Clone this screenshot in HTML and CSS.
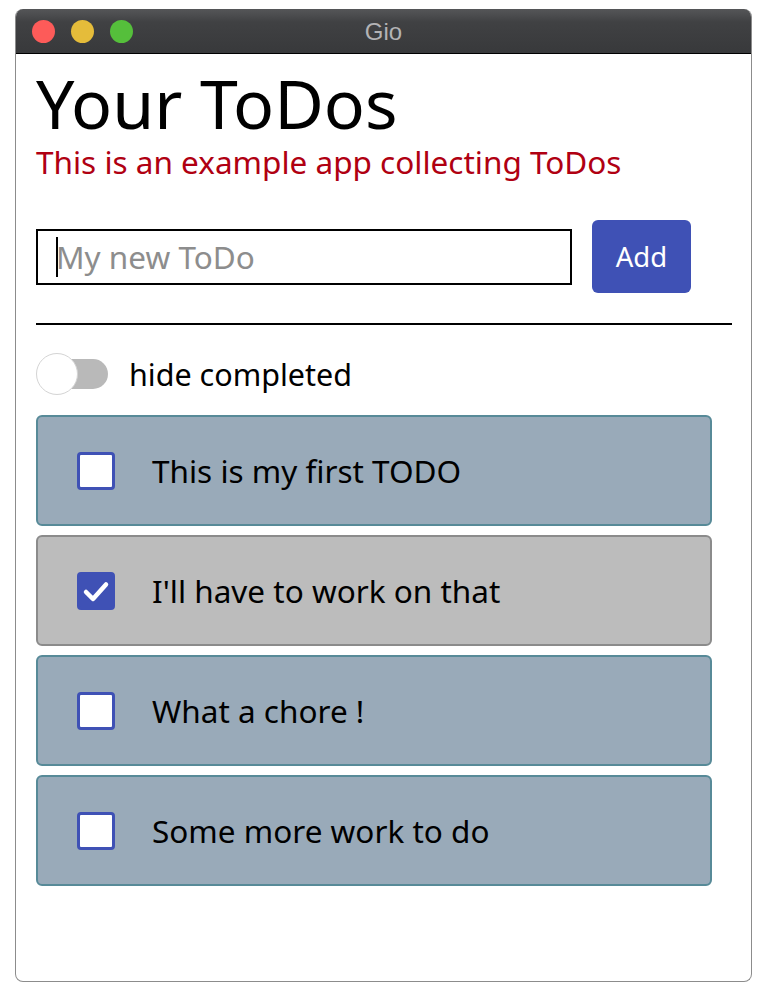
FILE: index.html
```html
<!DOCTYPE html>
<html>
<head>
<meta charset="utf-8">
<link rel="stylesheet" href="styles.css">
</head>
<body>
<div class="window">
  <div class="titlebar">
    <div class="lights">
      <span class="light red"></span>
      <span class="light yellow"></span>
      <span class="light green"></span>
    </div>
    <div class="title">Gio</div>
  </div>
  <div class="content">
    <h1 class="heading">Your ToDos</h1>
    <p class="subtitle">This is an example app collecting ToDos</p>
    <div class="new-row">
      <div class="input"><span class="caret"></span><span class="placeholder">My new ToDo</span></div>
      <button class="add-btn">Add</button>
    </div>
    <div class="separator"></div>
    <div class="switch-row">
      <div class="switch"><span class="track"></span><span class="thumb"></span></div>
      <span class="switch-label">hide completed</span>
    </div>
    <div class="list">
      <div class="card">
        <span class="checkbox"></span>
        <span class="card-text">This is my first TODO</span>
      </div>
      <div class="card done">
        <span class="checkbox checked">
          <svg viewBox="0 0 38 38" width="38" height="38"><path d="M9 20 L16 27 L29 12.5" fill="none" stroke="#fff" stroke-width="4.5" stroke-linecap="round" stroke-linejoin="round"/></svg>
        </span>
        <span class="card-text">I'll have to work on that</span>
      </div>
      <div class="card">
        <span class="checkbox"></span>
        <span class="card-text">What a chore !</span>
      </div>
      <div class="card">
        <span class="checkbox"></span>
        <span class="card-text">Some more work to do</span>
      </div>
    </div>
  </div>
</div>
</body>
</html>
```

FILE: styles.css
```css
html, body {
  margin: 0;
  padding: 0;
  background: #ffffff;
}

body {
  padding: 9px 0 0 15px;
  font-family: "Noto Sans", "DejaVu Sans", sans-serif;
}

.window {
  width: 735px;
  height: 972px;
  border: 1px solid #8c8c8c;
  border-top: none;
  border-radius: 8px;
  overflow: hidden;
  background: #ffffff;
  display: flex;
  flex-direction: column;
}

.titlebar {
  height: 44px;
  flex: none;
  background: linear-gradient(#555658, #404143 30%, #38393b);
  border-bottom: 1px solid #000;
  display: flex;
  align-items: center;
  position: relative;
}

.lights {
  display: flex;
  gap: 16px;
  padding-left: 16px;
}

.light {
  width: 23px;
  height: 23px;
  border-radius: 50%;
  display: block;
}
.red { background: #fd5b59; }
.yellow { background: #e5bc3a; }
.green { background: #55bf3b; }

.title {
  position: absolute;
  left: 0;
  right: 0;
  top: 0;
  height: 46px;
  line-height: 46px;
  text-align: center;
  color: #b3b3b5;
  font-family: "Liberation Sans", Arial, sans-serif;
  font-size: 24px;
}

.content {
  padding: 0 20px;
}

.heading {
  margin: 15px 0 0 0;
  font-weight: normal;
  font-size: 68px;
  line-height: 68px;
  color: #000;
}

.subtitle {
  margin: 9px 0 0 0;
  font-size: 31.5px;
  line-height: 32px;
  color: #b00012;
}

.new-row {
  display: flex;
  align-items: center;
  margin-top: 42px;
  gap: 20px;
}

.input {
  width: 514px;
  height: 52px;
  border: 2px solid #000;
  display: flex;
  align-items: center;
  padding-left: 18px;
}

.caret {
  width: 2px;
  height: 40px;
  background: #000;
  display: block;
}

.placeholder {
  font-size: 31.5px;
  color: #8d8d8d;
  margin-left: -2px;
}

.add-btn {
  width: 99px;
  height: 73px;
  border: none;
  border-radius: 6px;
  background: #3f51b5;
  color: #fff;
  font-family: inherit;
  font-size: 27.5px;
  padding: 0;
}

.separator {
  height: 2px;
  background: #000;
  margin-top: 30px;
  width: 696px;
}

.switch-row {
  display: flex;
  align-items: center;
  margin-top: 28px;
  gap: 21px;
}

.switch {
  position: relative;
  width: 72px;
  height: 42px;
}

.track {
  position: absolute;
  left: 14px;
  top: 6px;
  width: 58px;
  height: 30px;
  border-radius: 15px;
  background: #b9b9b9;
}

.thumb {
  position: absolute;
  left: 0;
  top: 0;
  width: 40px;
  height: 40px;
  border-radius: 50%;
  background: #fff;
  border: 1px solid #d4d4d4;
}

.switch-label {
  font-size: 30.5px;
  color: #000;
}

.list {
  margin-top: 20px;
  display: flex;
  flex-direction: column;
  gap: 9px;
  width: 676px;
}

.card {
  height: 107px;
  border: 2px solid #578a98;
  border-radius: 6px;
  background: #99aab9;
  display: flex;
  align-items: center;
  padding-left: 39px;
}

.card.done {
  background: #bcbcbc;
  border-color: #8b8b8b;
}

.checkbox {
  width: 32px;
  height: 32px;
  border: 3px solid #3f51b5;
  border-radius: 4px;
  background: #fff;
  display: block;
  flex: none;
  position: relative;
}

.checkbox.checked {
  background: #3f51b5;
}

.checkbox svg {
  position: absolute;
  left: -3px;
  top: -3px;
}

.card-text {
  margin-left: 37px;
  font-size: 31.5px;
  color: #000;
}
```
